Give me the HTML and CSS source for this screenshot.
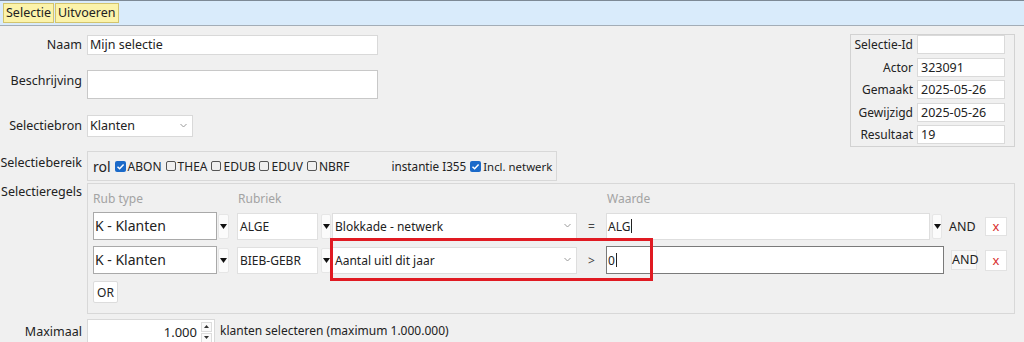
FILE: index.html
```html
<!DOCTYPE html>
<html lang="nl">
<head>
  <meta charset="UTF-8" />
  <title>Selectie</title>
  <link rel="stylesheet" href="styles.css">
</head>
<body>
  <div class="toolbar">
    <button class="tb-btn">Selectie</button>
    <button class="tb-btn">Uitvoeren</button>
  </div>

  <div class="main">
    <div class="top">
      <div class="top-form">
        <div class="row row-naam">
          <div class="lbl">Naam</div>
          <div class="field f-naam">Mijn selectie</div>
        </div>
        <div class="row row-besch">
          <div class="lbl">Beschrijving</div>
          <div class="field f-besch"></div>
        </div>
        <div class="row row-bron">
          <div class="lbl">Selectiebron</div>
          <div class="field f-bron">Klanten
            <svg class="chev" width="7" height="5" viewBox="0 0 7 5"><polyline points="0.5,1 3.5,4 6.5,1" fill="none" stroke="#9a9a9a" stroke-width="1"/></svg>
          </div>
        </div>
      </div>

      <!-- info rechts -->
      <div class="info">
        <div class="info-lbl">Selectie-Id</div><div class="info-val"></div>
        <div class="info-lbl">Actor</div><div class="info-val">323091</div>
        <div class="info-lbl">Gemaakt</div><div class="info-val">2025-05-26</div>
        <div class="info-lbl">Gewijzigd</div><div class="info-val">2025-05-26</div>
        <div class="info-lbl">Resultaat</div><div class="info-val">19</div>
      </div>
    </div>

    <div class="row row-bereik">
      <div class="lbl">Selectiebereik</div>
      <div class="bereik">
        <span class="rol">rol</span>
        <span class="cb cb-on"><svg width="11" height="11" viewBox="0 0 11 11"><rect x="0" y="0" width="11" height="11" rx="2" fill="#1b6ac9"/><polyline points="2.5,5.8 4.6,7.8 8.6,3.4" fill="none" stroke="#fff" stroke-width="1.5"/></svg></span><span class="cb-txt">ABON</span>
        <span class="cb"></span><span class="cb-txt">THEA</span>
        <span class="cb"></span><span class="cb-txt">EDUB</span>
        <span class="cb"></span><span class="cb-txt">EDUV</span>
        <span class="cb"></span><span class="cb-txt">NBRF</span>
        <span class="inst">instantie I355</span>
        <span class="cb cb-on"><svg width="11" height="11" viewBox="0 0 11 11"><rect x="0" y="0" width="11" height="11" rx="2" fill="#1b6ac9"/><polyline points="2.5,5.8 4.6,7.8 8.6,3.4" fill="none" stroke="#fff" stroke-width="1.5"/></svg></span><span class="cb-txt netwerk">Incl. netwerk</span>
      </div>
    </div>

    <div class="row row-regels">
      <div class="lbl">Selectieregels</div>
      <div class="regels">
        <div class="regel-head">
          <span class="h-rt">Rub type</span>
          <span class="h-rub">Rubriek</span>
          <span>Waarde</span>
        </div>

        <div class="regel">
          <div class="rt-input">K - Klanten</div>
          <div class="drop"><svg width="7" height="5" viewBox="0 0 7 5"><polygon points="0,0 7,0 3.5,5" fill="#111"/></svg></div>
          <div class="rub-input">ALGE</div>
          <div class="drop drop-rub"><svg width="7" height="5" viewBox="0 0 7 5"><polygon points="0,0 7,0 3.5,5" fill="#111"/></svg></div>
          <div class="sel">Blokkade - netwerk
            <svg class="chev" width="7" height="5" viewBox="0 0 7 5"><polyline points="0.5,1 3.5,4 6.5,1" fill="none" stroke="#9a9a9a" stroke-width="1"/></svg>
          </div>
          <div class="op">=</div>
          <div class="waarde">ALG<span class="caret"></span></div>
          <div class="drop drop-w"><svg width="7" height="5" viewBox="0 0 7 5"><polygon points="0,0 7,0 3.5,5" fill="#111"/></svg></div>
          <div class="and">AND</div>
          <div class="del">x</div>
        </div>

        <div class="regel">
          <div class="rt-input">K - Klanten</div>
          <div class="drop"><svg width="7" height="5" viewBox="0 0 7 5"><polygon points="0,0 7,0 3.5,5" fill="#111"/></svg></div>
          <div class="rub-input">BIEB-GEBR</div>
          <div class="drop drop-rub"><svg width="7" height="5" viewBox="0 0 7 5"><polygon points="0,0 7,0 3.5,5" fill="#111"/></svg></div>
          <div class="sel">Aantal uitl dit jaar
            <svg class="chev" width="7" height="5" viewBox="0 0 7 5"><polyline points="0.5,1 3.5,4 6.5,1" fill="none" stroke="#9a9a9a" stroke-width="1"/></svg>
          </div>
          <div class="op">&gt;</div>
          <div class="waarde waarde-focus">0<span class="caret"></span></div>
          <div class="and and-btn">AND</div>
          <div class="del del-2">x</div>
        </div>

        <button class="or-btn">OR</button>
      </div>
    </div>

    <div class="row row-max">
      <div class="lbl">Maximaal</div>
      <div class="spin">
        <span class="spin-val">1.000</span>
        <span class="spin-btns">
          <span class="spin-b"><svg width="5" height="3" viewBox="0 0 5 3"><polygon points="0,3 5,3 2.5,0" fill="#333"/></svg></span>
          <span class="spin-b"><svg width="5" height="3" viewBox="0 0 5 3"><polygon points="0,0 5,0 2.5,3" fill="#333"/></svg></span>
        </span>
      </div>
      <span class="max-txt">klanten selecteren (maximum 1.000.000)</span>
    </div>
  </div>

  <!-- rode markering -->
  <div class="highlight"></div>
</body>
</html>
```

FILE: styles.css
```css
body {
  margin: 0;
  width: 1024px;
  height: 342px;
  overflow: hidden;
  position: relative;
  background: #f0f0f0;
  font-family: 'Noto Sans', 'Open Sans', sans-serif;
  font-size: 12px;
  color: #222;
}
.toolbar {
  height: 24px;
  border-top: 1px solid #7d8995;
  border-bottom: 1px solid #a3adb7;
  background: #d9ebfb;
  display: flex;
  align-items: center;
  padding-left: 3px;
  gap: 1px;
}
.tb-btn {
  height: 20px;
  padding: 0 2px;
  background: #fbf3aa;
  border: 1px solid #d3c46d;
  font-family: inherit;
  font-size: 12.5px;
  line-height: 18px;
  color: #222;
}
.main {
  padding-right: 9px;
}
.top {
  display: flex;
  justify-content: space-between;
  align-items: flex-start;
  padding-top: 8px;
}
.top-form {
  margin-top: 1px;
}
.row {
  display: flex;
  align-items: flex-start;
}
.lbl {
  width: 82px;
  margin-right: 5px;
  text-align: right;
  line-height: 17px;
  font-size: 12.5px;
  white-space: nowrap;
}
.field {
  box-sizing: border-box;
  background: #fff;
  border: 1px solid #d9d9d9;
  padding-left: 2px;
  font-size: 12.5px;
  position: relative;
}
.row-naam .lbl { line-height: 20px; }
.f-naam {
  width: 291px;
  height: 20px;
  line-height: 18px;
}
.row-besch { margin-top: 15px; }
.row-besch .lbl { padding-top: 2px; }
.f-besch {
  width: 291px;
  height: 29px;
  border-color: #c8c8c8;
}
.row-bron { margin-top: 16px; }
.row-bron .lbl { line-height: 22px; }
.f-bron {
  width: 106px;
  height: 22px;
  line-height: 20px;
}
.chev {
  position: absolute;
  right: 5px;
  top: 50%;
  margin-top: -3px;
}

/* info paneel */
.info {
  box-sizing: border-box;
  width: 165px;
  height: 113px;
  border: 1px solid #d2d2d2;
  padding: 0 9px 0 0;
  display: grid;
  grid-template-columns: 62px 88px;
  grid-auto-rows: 19px;
  column-gap: 4px;
  row-gap: 3.5px;
}
.info-lbl {
  text-align: right;
  line-height: 19px;
  font-size: 12px;
}
.info-val {
  background: #fff;
  border: 1px solid #dadada;
  line-height: 17px;
  padding-left: 3px;
  font-size: 12.5px;
}

/* selectiebereik */
.row-bereik { margin-top: 4px; }
.row-bereik .lbl { padding-top: 3px; }
.bereik {
  box-sizing: border-box;
  width: 470px;
  height: 30px;
  border: 1px solid #d8d8d8;
  display: flex;
  align-items: center;
  padding-left: 5px;
  font-size: 12px;
  white-space: nowrap;
}
.bereik span { flex-shrink: 0; }
.rol {
  font-size: 14px;
  margin-right: 4px;
}
.cb {
  display: inline-block;
  box-sizing: border-box;
  width: 10px;
  height: 10px;
  border: 1px solid #555;
  border-radius: 2px;
  margin-right: 2px;
}
.cb-on {
  border: none;
  width: 11px;
  height: 11px;
  margin-right: 2px;
}
.cb-on svg { display: block; }
.cb-txt { margin-right: 4px; }
.inst {
  margin-left: 38px;
  margin-right: 4px;
  font-size: 11.7px;
}
.netwerk { font-size: 11.4px; }

/* selectieregels */
.row-regels { margin-top: 2px; }
.row-regels .lbl { padding-top: 0; }
.regels {
  flex: 1;
  box-sizing: border-box;
  height: 131px;
  border: 1px solid #d8d8d8;
  padding: 7px 7px 0 5px;
  position: relative;
}
.regel-head {
  display: flex;
  height: 16px;
  line-height: 16px;
  color: #a3a3a3;
  font-size: 12px;
}
.h-rt { width: 145px; }
.h-rub { width: 369px; }
.regel {
  display: flex;
  align-items: center;
  height: 28px;
  margin-top: 5px;
}
.regel + .regel { margin-top: 6px; }
.rt-input {
  box-sizing: border-box;
  width: 124px;
  height: 28px;
  background: #fff;
  border: 1px solid #a9a9a9;
  font-size: 14px;
  line-height: 26px;
  padding-left: 1px;
}
.drop {
  box-sizing: border-box;
  width: 11px;
  height: 25px;
  margin-left: 1px;
  background: #fbfbfb;
  border: 1px solid #e6e6e6;
  border-radius: 2px;
  display: flex;
  justify-content: center;
  padding-top: 9px;
}
.drop svg { display: block; }
.rub-input {
  box-sizing: border-box;
  width: 81px;
  height: 27px;
  margin-left: 8px;
  background: #fff;
  border: 1px solid #e0e0e0;
  line-height: 25px;
  padding-left: 2px;
}
.drop-rub { margin-left: 3px; width: 10px; }
.sel {
  box-sizing: border-box;
  width: 245px;
  height: 27px;
  margin-left: 1px;
  background: #fff;
  border: 1px solid #dedede;
  line-height: 25px;
  padding-left: 2px;
  position: relative;
}
.op {
  width: 29px;
  text-align: center;
  color: #444;
}
.waarde {
  flex: 1;
  box-sizing: border-box;
  height: 27px;
  background: #fff;
  border: 1px solid #dedede;
  line-height: 25px;
  padding-left: 1px;
  display: flex;
  align-items: center;
}
.caret {
  display: inline-block;
  width: 0;
  height: 14px;
  border-left: 1px solid #222;
  margin-left: 1px;
}
.waarde-focus {
  border-color: #7a7a7a;
  height: 28px;
}
.drop-w { margin-left: 2px; width: 10px; }
.and {
  width: 26px;
  margin-left: 7px;
  text-align: center;
  font-size: 12.5px;
}
.and-btn {
  box-sizing: border-box;
  height: 20px;
  line-height: 18px;
  background: #f7f7f7;
  border: 1px solid #e3e3e3;
}
.del {
  box-sizing: border-box;
  width: 22px;
  height: 19px;
  margin-left: 10px;
  background: #fff;
  border: 1px solid #e2e2e2;
  color: #d8302f;
  text-align: center;
  line-height: 16px;
  font-size: 13px;
}
.del-2 { margin-left: 8px; height: 21px; line-height: 18px; }
.or-btn {
  display: block;
  box-sizing: border-box;
  width: 25px;
  height: 22px;
  margin-top: 7px;
  padding: 0;
  background: #fff;
  border: 1px solid #dcdcdc;
  border-radius: 2px;
  font-family: inherit;
  font-size: 12px;
  color: #222;
}

/* maximaal */
.row-max {
  margin-top: 5px;
  align-items: center;
}
.row-max .lbl { line-height: 24px; }
.spin {
  box-sizing: border-box;
  width: 128px;
  height: 26px;
  background: #fff;
  border: 1px solid #d9d9d9;
  display: flex;
  align-items: center;
  justify-content: flex-end;
  padding-right: 2px;
  align-self: flex-start;
}
.spin-val {
  font-size: 13px;
  margin-right: 4px;
}
.spin-btns {
  display: flex;
  flex-direction: column;
  gap: 1px;
}
.spin-b {
  box-sizing: border-box;
  width: 11px;
  height: 10px;
  border: 1px solid #dcdcdc;
  background: #fafafa;
  display: flex;
  align-items: center;
  justify-content: center;
}
.spin-b svg { display: block; }
.max-txt {
  margin-left: 5px;
  font-size: 12px;
  align-self: flex-start;
  line-height: 24px;
}

.highlight {
  position: absolute;
  left: 330px;
  top: 238px;
  width: 323px;
  height: 43px;
  box-sizing: border-box;
  border: 3px solid #e01a22;
}
```
